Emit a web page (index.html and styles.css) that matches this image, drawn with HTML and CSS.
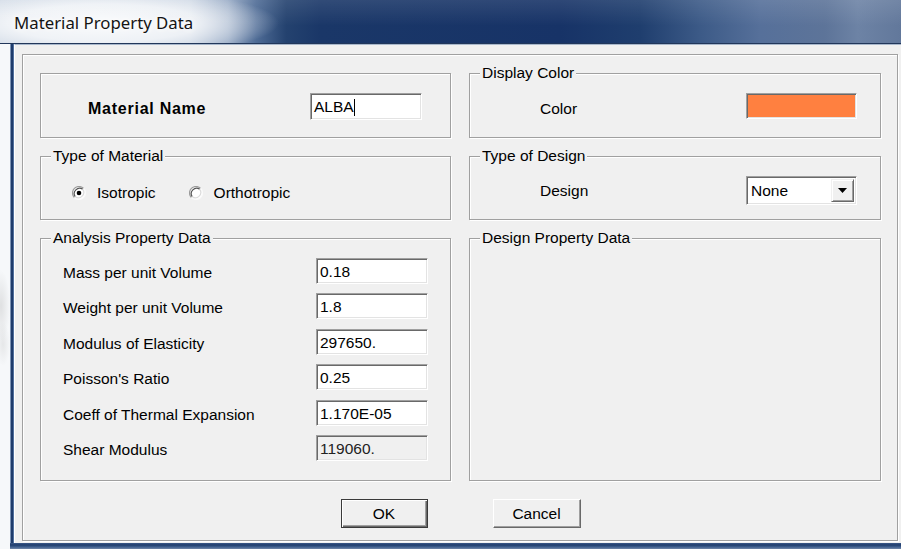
FILE: index.html
```html
<!DOCTYPE html>
<html lang="en">
<head>
<meta charset="utf-8">
<title>Material Property Data</title>
<link rel="stylesheet" href="styles.css">
</head>
<body>
<div class="screen">
  <header class="titlebar"><span class="title">Material Property Data</span></header>
  <div class="middle">
    <div class="desk"></div>
    <div class="edge-left"></div>
    <div class="client">
      <div class="panel">
        <div class="grid">
          <div class="box">
            <div class="name-row">
              <span class="name-label">Material Name</span>
              <div class="field name-field"><span class="value">ALBA</span><span class="caret"></span></div>
            </div>
          </div>

          <div class="box">
            <span class="legend">Display Color</span>
            <div class="pick-row color-row">
              <span class="lbl">Color</span>
              <div class="field swatch"></div>
            </div>
          </div>

          <div class="box">
            <span class="legend">Type of Material</span>
            <div class="radio-row">
              <label class="radio">
                <svg class="radio-dot" width="14" height="14" viewBox="0 0 14 14">
                  <circle cx="7" cy="7" r="6.3" fill="#fff"/>
                  <path d="M2.4 11.6A6.5 6.5 0 0 1 11.6 2.4" fill="none" stroke="#9a9a9a" stroke-width="1.2"/>
                  <path d="M11.6 2.4A6.5 6.5 0 0 1 2.4 11.6" fill="none" stroke="#fafafa" stroke-width="1.2"/>
                  <path d="M3.3 10.7A5.3 5.3 0 0 1 10.7 3.3" fill="none" stroke="#555" stroke-width="1.2"/>
                  <path d="M10.7 3.3A5.3 5.3 0 0 1 3.3 10.7" fill="none" stroke="#dcdcdc" stroke-width="1.2"/>
                  <circle cx="7" cy="7" r="2.3" fill="#000"/>
                </svg>
                <span>Isotropic</span>
              </label>
              <label class="radio">
                <svg class="radio-dot" width="14" height="14" viewBox="0 0 14 14">
                  <circle cx="7" cy="7" r="6.3" fill="#fff"/>
                  <path d="M2.4 11.6A6.5 6.5 0 0 1 11.6 2.4" fill="none" stroke="#9a9a9a" stroke-width="1.2"/>
                  <path d="M11.6 2.4A6.5 6.5 0 0 1 2.4 11.6" fill="none" stroke="#fafafa" stroke-width="1.2"/>
                  <path d="M3.3 10.7A5.3 5.3 0 0 1 10.7 3.3" fill="none" stroke="#555" stroke-width="1.2"/>
                  <path d="M10.7 3.3A5.3 5.3 0 0 1 3.3 10.7" fill="none" stroke="#dcdcdc" stroke-width="1.2"/>
                </svg>
                <span>Orthotropic</span>
              </label>
            </div>
          </div>

          <div class="box">
            <span class="legend">Type of Design</span>
            <div class="pick-row design-row">
              <span class="lbl">Design</span>
              <div class="field combo">
                <span class="combo-text">None</span>
                <span class="combo-btn">
                  <svg width="9" height="5" viewBox="0 0 9 5"><path d="M0 0H9L4.5 5Z" fill="#000"/></svg>
                </span>
              </div>
            </div>
          </div>

          <div class="box">
            <span class="legend">Analysis Property Data</span>
            <div class="props">
              <span class="lbl">Mass per unit Volume</span>
              <div class="field prop-field">0.18</div>
              <span class="lbl">Weight per unit Volume</span>
              <div class="field prop-field">1.8</div>
              <span class="lbl">Modulus of Elasticity</span>
              <div class="field prop-field">297650.</div>
              <span class="lbl">Poisson's Ratio</span>
              <div class="field prop-field">0.25</div>
              <span class="lbl">Coeff of Thermal Expansion</span>
              <div class="field prop-field">1.170E-05</div>
              <span class="lbl">Shear Modulus</span>
              <div class="field prop-field disabled">119060.</div>
            </div>
          </div>

          <div class="box">
            <span class="legend">Design Property Data</span>
          </div>
        </div>

        <div class="buttons">
          <button class="btn default" type="button">OK</button>
          <button class="btn" type="button">Cancel</button>
        </div>
      </div>
    </div>
  </div>
  <div class="bottom">
    <div class="desk"></div>
    <div class="edge-bottom"></div>
  </div>
</div>
</body>
</html>
```

FILE: styles.css
```css
* {
  box-sizing: border-box;
}

html,
body {
  margin: 0;
  padding: 0;
}

body {
  width: 901px;
  height: 549px;
  overflow: hidden;
  background: #f5f7f9;
  font-family: "Liberation Sans", Arial, sans-serif;
  font-size: 15.5px;
  color: #000;
}

.screen {
  display: flex;
  flex-direction: column;
  width: 901px;
  height: 549px;
}

/* Aero caption bar with the glow behind the caption text */
.titlebar {
  flex: none;
  height: 44px;
  display: flex;
  align-items: center;
  padding: 1px 0 0 14px;
  border-bottom: 1px solid #22375a;
  background:
    linear-gradient(to bottom, rgba(255, 255, 255, 0.1), rgba(255, 255, 255, 0) 60%),
    radial-gradient(ellipse 175px 34px at 104px 23px, rgba(255, 255, 255, 0.92) 0%, rgba(255, 255, 255, 0.7) 55%, rgba(255, 255, 255, 0) 100%),
    linear-gradient(to right, #cdd7e4 0px, #c3cfdf 190px, #97aac5 228px, #4f6c96 256px, #24426f 286px, #1a3768 320px, #173367 560px, #1f3e6e 640px, #3c5a87 700px, #56709a 760px, #5d7499 825px, #6d83a5 858px, #62789b 901px);
}

.title {
  font-family: "Noto Sans", "Open Sans", sans-serif;
  font-size: 16.8px;
  color: #141414;
  text-shadow: 0 0 6px #fff, 0 0 10px #fff;
}

.middle {
  flex: 1;
  display: flex;
  min-height: 0;
}

.desk {
  flex: none;
  width: 10px;
  background:
    radial-gradient(ellipse 9px 36px at 1px 262px, rgba(170, 170, 170, 0.3), rgba(170, 170, 170, 0)),
    radial-gradient(ellipse 7px 22px at 3px 300px, rgba(180, 180, 180, 0.25), rgba(180, 180, 180, 0)),
    #f6f8fa;
}

.edge-left {
  flex: none;
  width: 4px;
  background: linear-gradient(to right, #7d93b4 0, #7d93b4 1px, #1f3c6c 1px, #1f3c6c 3px, #52709d 3px);
}

.client {
  flex: 1;
  display: flex;
  align-items: flex-start;
  background: #f0f0f0;
  border-top: 1px solid #a9b8cc;
  border-left: 1px solid #fff;
  padding: 9px 3px 0 7px;
}

/* etched frame */
.panel,
.box {
  border: 1px solid #a0a0a0;
  box-shadow: 1px 1px 0 #fff, inset 1px 1px 0 #fff;
}

.panel {
  flex: 1;
  padding: 18px 16px 12px 17px;
}

.grid {
  display: grid;
  grid-template-columns: 411px 412px;
  grid-template-rows: 65px 64px 243px;
  gap: 18px;
}

.box {
  min-width: 0;
}

.legend {
  display: block;
  width: max-content;
  margin: -9px 0 0 10px;
  padding: 0 2px;
  line-height: 16px;
  background: #f0f0f0;
}

.lbl {
  line-height: 18px;
  white-space: nowrap;
}

/* sunken edit field */
.field {
  background: #fff;
  border: 1px solid;
  border-color: #a0a0a0 #fff #fff #a0a0a0;
  box-shadow: inset 1px 1px 0 #696969, inset -1px -1px 0 #e3e3e3;
}

.name-row {
  display: flex;
  align-items: flex-start;
  justify-content: space-between;
  margin-top: 19px;
  padding: 0 28px 0 47px;
}

.name-label {
  padding-top: 7px;
  line-height: 18px;
  font-weight: bold;
  font-size: 16px;
  letter-spacing: 0.75px;
}

.name-field {
  width: 112px;
  height: 27px;
  display: flex;
  align-items: center;
  padding: 1px 0 0 3px;
}

.caret {
  display: inline-block;
  width: 1px;
  height: 17px;
  background: #000;
}

.pick-row {
  display: flex;
  align-items: flex-start;
  justify-content: space-between;
  padding: 0 23px 0 70px;
}

.color-row {
  margin-top: 12px;
}

.color-row .lbl {
  padding-top: 7px;
}

.swatch {
  width: 111px;
  height: 26px;
  background: #ff8040;
}

.design-row {
  margin-top: 12px;
}

.design-row .lbl {
  padding-top: 6px;
}

.combo {
  width: 111px;
  height: 29px;
  display: flex;
  align-items: stretch;
  padding: 2px;
}

.combo-text {
  flex: 1;
  padding: 3px 0 0 2px;
  line-height: 18px;
}

.combo-btn {
  flex: none;
  width: 23px;
  display: flex;
  align-items: center;
  justify-content: center;
  background: #f0f0f0;
  border: 1px solid;
  border-color: #f0f0f0 #696969 #696969 #f0f0f0;
  box-shadow: inset 1px 1px 0 #fff, inset -1px -1px 0 #a0a0a0;
}

.radio-row {
  display: flex;
  align-items: center;
  margin-top: 20px;
  padding-left: 31px;
  line-height: 18px;
}

.radio {
  display: flex;
  align-items: center;
  gap: 11px;
}

.radio + .radio {
  margin-left: 33px;
}

.radio-dot {
  flex: none;
}

.props {
  display: grid;
  grid-template-columns: 1fr 112px;
  grid-auto-rows: 26px;
  row-gap: 9.4px;
  margin-top: 12px;
  padding: 0 22px;
}

.props .lbl {
  padding-top: 6px;
}

.prop-field {
  padding: 4px 0 0 3px;
  line-height: 18px;
}

.prop-field.disabled {
  background: #f0f0f0;
  color: #222;
}

.buttons {
  display: flex;
  justify-content: center;
  gap: 65px;
  margin-top: 18px;
}

.btn {
  width: 88px;
  height: 29px;
  padding: 0;
  margin: 0;
  font: inherit;
  color: #000;
  background: #f0f0f0;
  border: 1px solid;
  border-color: #fff #696969 #696969 #fff;
  box-shadow: inset -1px -1px 0 #a0a0a0, inset 1px 1px 0 #f0f0f0;
  border-radius: 0;
}

.btn.default {
  width: 87px;
  border-color: #3a3a3a;
  box-shadow: inset 1px 1px 0 #fff, inset -1px -1px 0 #696969, inset -2px -2px 0 #a0a0a0;
}

.bottom {
  flex: none;
  height: 6px;
  display: flex;
}

.edge-bottom {
  flex: 1;
  background: linear-gradient(to bottom, #3d5b8a 0, #1f3c6c 2px, #3f5f8e 4px, #7287a8 6px);
}
```
